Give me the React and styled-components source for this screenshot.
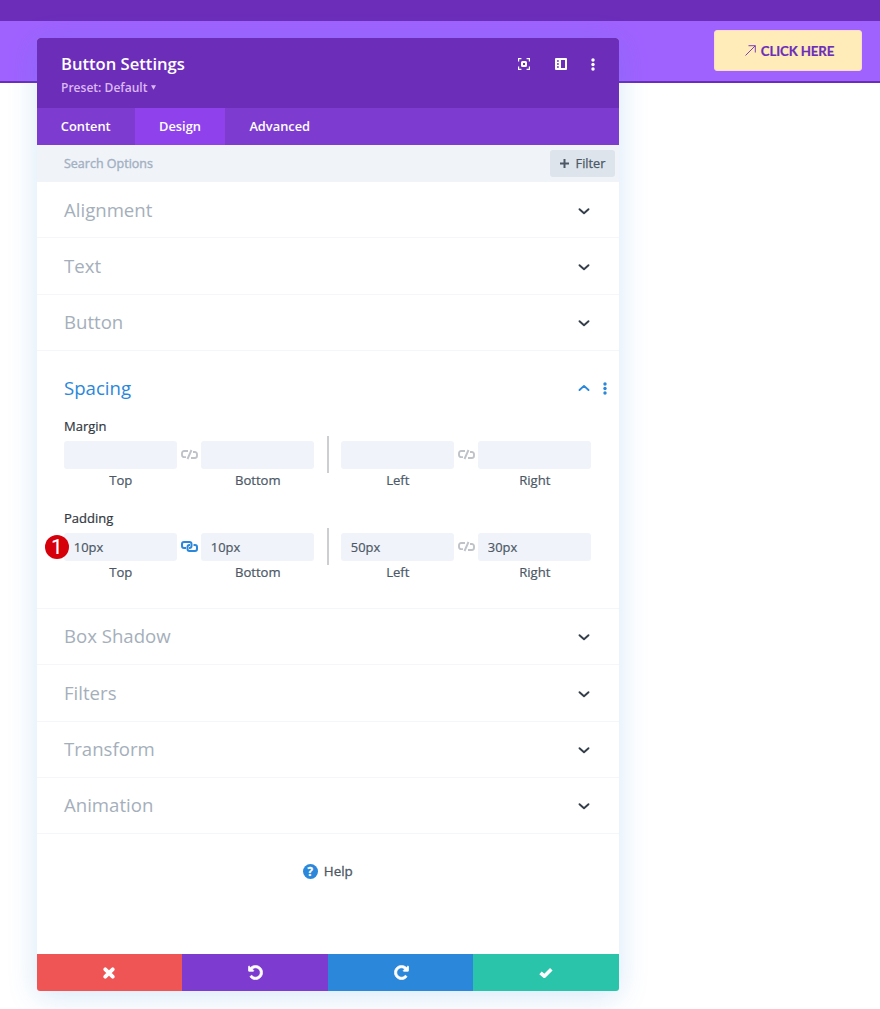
import React from 'react';
import styled, { createGlobalStyle } from 'styled-components';

const GlobalStyle = createGlobalStyle`
  * { box-sizing: border-box; }
  body {
    margin: 0;
    background: #fff;
    font-family: "Open Sans", "Noto Sans", sans-serif;
    overflow: hidden;
  }
  button, input { font-family: inherit; border: 0; margin: 0; padding: 0; }
  svg { display: block; }
`;

const Page = styled.div`
  position: relative;
  height: 1009px;
  overflow: hidden;
`;

const TopBar = styled.div`
  height: 21px;
  background: #6c2eb9;
`;

const SiteHeader = styled.header`
  display: flex;
  justify-content: flex-end;
  height: 62px;
  padding: 9px 18px 0 0;
  background: #a062ff;
  border-bottom: 2px solid #6c2eb9;
`;

const ClickButton = styled.button`
  display: flex;
  align-items: center;
  justify-content: center;
  gap: 5px;
  width: 148px;
  height: 41px;
  padding: 0 0 0 3px;
  border-radius: 3px;
  border: 1px solid #fbdcc9;
  background: #ffecb9;
  color: #6c2eb9;
  font: 700 13.3px/20px "Lato", sans-serif;
  letter-spacing: -0.15px;
  -webkit-text-stroke: 0.2px currentColor;
  white-space: nowrap;
`;

const Modal = styled.section`
  position: absolute;
  top: 38px;
  left: 36.5px;
  display: flex;
  flex-direction: column;
  width: 582.5px;
  height: 953px;
  border-radius: 3px;
  background: #fff;
  box-shadow: 0 5px 30px rgba(43, 135, 218, 0.2);
`;

const ModalHeader = styled.div`
  display: flex;
  justify-content: space-between;
  height: 70px;
  padding: 14px 24px 0 24.5px;
  border-radius: 3px 3px 0 0;
  background: #6c2eb9;
  color: #fff;
`;

const ModalTitle = styled.h1`
  margin: 0;
  font-size: 16.6px;
  font-weight: 600;
  line-height: 24px;
`;

const Preset = styled.div`
  display: flex;
  align-items: center;
  gap: 4px;
  font-size: 12.05px;
  font-weight: 600;
  line-height: 23px;
  color: #dcb8f5;
`;

const HeaderIcons = styled.div`
  display: flex;
  align-items: center;
  gap: 24.5px;
  height: 24px;
`;

const Tabs = styled.nav`
  display: flex;
  height: 37px;
  background: #7e3bd0;
`;

const Tab = styled.button`
  padding: 0 24.1px 1px 24.3px;
  background: ${p => (p.$active ? '#8f42ec' : 'transparent')};
  color: #fff;
  font-size: 12.85px;
  font-weight: 600;
`;

const SearchBar = styled.div`
  display: flex;
  align-items: center;
  justify-content: space-between;
  height: 37px;
  padding: 0 4px 0 27.5px;
  background: #f0f4f9;
  color: #a3b0c2;
  font-size: 12.5px;
  -webkit-text-stroke: 0.4px currentColor;
`;

const FilterButton = styled.button`
  display: flex;
  align-items: center;
  justify-content: center;
  gap: 7px;
  width: 65px;
  height: 27px;
  padding-bottom: 1px;
  border-radius: 3px;
  background: #dde4ec;
  color: #4c5866;
  font-size: 12.7px;
  -webkit-text-stroke: 0.25px currentColor;
`;

const Group = styled.div`
  height: ${p => (p.$open ? '257.8px' : '56.35px')};
  padding: ${p => (p.$open ? '9px' : '0')} 27.5px 0;
  border-bottom: 1px solid #f4f6f9;
`;

const GroupHead = styled.div`
  display: flex;
  align-items: center;
  justify-content: space-between;
  height: 56px;
  color: ${p => (p.$open ? '#2b87da' : '#a5afbb')};
`;

const GroupTitle = styled.h2`
  margin: 0;
  padding-bottom: 1px;
  font-size: 18.6px;
  font-weight: 400;
  line-height: 26px;
`;

const GroupTools = styled.div`
  display: flex;
  align-items: center;
  gap: 12.5px;
  padding-top: ${p => (p.$open ? '0' : '1px')};
  margin-right: ${p => (p.$open ? '-15px' : '2px')};
`;

const Field = styled.div`
  height: 91.3px;
  color: #32373f;
`;

const FieldLabel = styled.div`
  height: 25.2px;
  padding-top: 0.4px;
  font-size: 13px;
  line-height: 20px;
  -webkit-text-stroke: 0.2px currentColor;
`;

const Sides = styled.div`
  display: grid;
  grid-template-columns: 113px 24px 113px 27px 113px 24px 113px;
  align-items: start;
  margin-left: 0.3px;
`;

const Side = styled.label`
  position: relative;
  text-align: center;
  color: #4c5866;
  font-size: 13.1px;
  line-height: 23px;
  -webkit-text-stroke: 0.2px currentColor;
`;

const SideInput = styled.input`
  display: block;
  width: 100%;
  height: 28px;
  padding: 0 9.5px;
  border-radius: 3px;
  background: #f0f3f9;
  color: #4c5866;
  font-size: 12.9px;
  -webkit-text-stroke: 0.2px currentColor;
`;

const LinkIcon = styled.div`
  display: flex;
  align-items: center;
  justify-content: center;
  height: 27px;
`;

const Divider = styled.div`
  justify-self: center;
  width: 2px;
  height: 37px;
  margin-top: -5px;
  background: #cdced1;
`;

const StepBadge = styled.span`
  position: absolute;
  top: 2px;
  left: -19.5px;
  width: 24px;
  height: 24px;
  border-radius: 50%;
  background: #d6000b;
  color: #fff;
  font: 400 20px/24px Roboto, sans-serif;
  text-align: center;
`;

const Help = styled.div`
  display: flex;
  flex: 1;
  align-items: flex-start;
  justify-content: center;
  gap: 6px;
  padding-top: 27px;
  color: #4c5866;
  font-size: 13.4px;
  line-height: 20px;
  -webkit-text-stroke: 0.3px currentColor;
`;

const HelpDot = styled.span`
  width: 15px;
  height: 15px;
  margin-top: 2.5px;
  border-radius: 50%;
  background: #2b87da;
  color: #fff;
  font-size: 11.5px;
  font-weight: 700;
  line-height: 15px;
  text-align: center;
`;

const Footer = styled.div`
  display: grid;
  grid-template-columns: repeat(4, 1fr);
  height: 37px;
  border-radius: 0 0 3px 3px;
  overflow: hidden;
`;

const FooterButton = styled.button`
  display: flex;
  align-items: center;
  justify-content: center;
  background: ${p => p.$color};
  color: #fff;
`;

const RotateIcon = styled.svg`
  margin-left: 1px;
  transform: ${p => (p.$flip ? 'scaleX(-1)' : 'none')};
`;

const Stroke = ({ w, h, d, sw = 2, cap = 'butt' }) => (
  <svg width={w} height={h} viewBox={`0 0 ${w} ${h}`} fill="none" stroke="currentColor"
    strokeWidth={sw} strokeLinecap={cap} strokeLinejoin="round">
    <path d={d} />
  </svg>
);

const Chevron = ({ up }) => (
  <Stroke w={12} h={8} sw={1.9} cap="round" d={up ? 'M1.5 6 6 1.9 10.5 6' : 'M1.5 2.2 6 6.3 10.5 2.2'} />
);

const Dots = () => (
  <svg width="4" height="13" viewBox="0 0 4 13" fill="currentColor">
    <circle cx="2" cy="2" r="1.7" />
    <circle cx="2" cy="6.5" r="1.7" />
    <circle cx="2" cy="11" r="1.7" />
  </svg>
);

const Focus = () => (
  <svg width="12" height="12" viewBox="0 0 12 12" fill="none" stroke="currentColor">
    <path strokeWidth="1.2" d="M.6 3.4V.6h2.8M8.6.6h2.8v2.8M11.4 8.6v2.8H8.6M3.4 11.4H.6V8.6" />
    <rect x="4" y="4" width="4" height="4" rx=".5" strokeWidth="2" />
  </svg>
);

const Columns = () => (
  <svg width="12" height="12" viewBox="0 0 12 12">
    <rect width="12" height="12" rx="1" fill="currentColor" />
    <path fill="#6c2eb9" d="M6 2h4v8H6zM2 2.2h1.8v1.6H2zM2 5.2h1.8v1.6H2zM2 8.2h1.8v1.6H2z" />
  </svg>
);

const Linked = ({ on }) => on ? (
  <svg width="17" height="11" viewBox="0 0 17 11" fill="none" stroke="#2b87da" strokeWidth="2">
    <path d="M5 7H3a2 2 0 0 1-2-2V3a2 2 0 0 1 2-2h5.500a2 2 0 0 1 2 2v2a2 2 0 0 1-2 2H8" />
    <path d="M12.500 4H14a2 2 0 0 1 2 2v2a2 2 0 0 1-2 2H8.500a2 2 0 0 1-2-2V6a2 2 0 0 1 2-2H9" />
  </svg>
) : (
  <svg width="17" height="11" viewBox="0 0 17 11" fill="none" stroke="#bfc3c9" strokeWidth="1.9">
    <path d="M7 2H3.200A2.200 2.200 0 0 0 1 4.200v1.700A2.200 2.200 0 0 0 3.200 8.100H5M10.500 1 6.500 10M12 3h1.800A2.200 2.200 0 0 1 16 5.200v1.600A2.200 2.200 0 0 1 13.800 9H10" />
  </svg>
);

const Rotate = ({ flip }) => (
  <RotateIcon $flip={flip} width="15" height="15" viewBox="-50 78 1636 1636" fill="currentColor" stroke="currentColor" strokeWidth="80">
    <path d="M1536 896q0 156-61 298t-164 245-245 164-298 61q-172 0-327-72.500T177 1387q-7-10-6.500-22.500t8.500-20.500l137-138q10-9 25-9 16 2 23 12 73 95 179 147t225 52q104 0 198.500-40.500T1130 1258t109.500-163.500T1280 896t-40.500-198.500T1130 534 966.500 424.500 768 384q-98 0-188 35.500T420 521l137 138q31 30 14 69-17 40-59 40H64q-26 0-45-19T0 704V256q0-42 40-59 39-17 69 14l130 129q107-101 244.500-156.500T768 128q156 0 298 61t245 164 164 245 61 298z" />
  </RotateIcon>
);

const Section = ({ title, open, children }) => (
  <Group $open={open}>
    <GroupHead $open={open}>
      <GroupTitle>{title}</GroupTitle>
      <GroupTools $open={open} style={{ color: open ? '#2b87da' : '#343f4a' }}>
        <Chevron up={open} />
        {open && <Dots />}
      </GroupTools>
    </GroupHead>
    {children}
  </Group>
);

const Spacing = ({ label, values, linked, step }) => (
  <Field>
    <FieldLabel>{label}</FieldLabel>
    <Sides>
      <Side>
        <SideInput defaultValue={values[0]} />
        Top
        {step && <StepBadge>{step}</StepBadge>}
      </Side>
      <LinkIcon><Linked on={linked} /></LinkIcon>
      <Side><SideInput defaultValue={values[1]} />Bottom</Side>
      <Divider />
      <Side><SideInput defaultValue={values[2]} />Left</Side>
      <LinkIcon><Linked /></LinkIcon>
      <Side><SideInput defaultValue={values[3]} />Right</Side>
    </Sides>
  </Field>
);

const App = () => (
  <Page>
    <GlobalStyle />
    <TopBar />
    <SiteHeader>
      <ClickButton>
        <Stroke w={11} h={11} sw={0.9} d="M.5 10.500 10.300.7M3.500.7h6.800v6.800" />
        CLICK HERE
      </ClickButton>
    </SiteHeader>
    <Modal>
      <ModalHeader>
        <div>
          <ModalTitle>Button Settings</ModalTitle>
          <Preset>
            Preset: Default
            <svg width="5" height="5" viewBox="0 0 5 5" fill="currentColor"><path d="M0 .3h5L2.500 4.800z" /></svg>
          </Preset>
        </div>
        <HeaderIcons>
          <Focus />
          <Columns />
          <Dots />
        </HeaderIcons>
      </ModalHeader>
      <Tabs>
        <Tab>Content</Tab>
        <Tab $active>Design</Tab>
        <Tab>Advanced</Tab>
      </Tabs>
      <SearchBar>
        Search Options
        <FilterButton>
          <Stroke w={9} h={9} d="M4.500 0v9M0 4.500h9" />
          Filter
        </FilterButton>
      </SearchBar>
      <Section title="Alignment" />
      <Section title="Text" />
      <Section title="Button" />
      <Section title="Spacing" open>
        <Spacing label="Margin" values={['', '', '', '']} />
        <Spacing label="Padding" values={['10px', '10px', '50px', '30px']} linked step="1" />
      </Section>
      <Section title="Box Shadow" />
      <Section title="Filters" />
      <Section title="Transform" />
      <Section title="Animation" />
      <Help><HelpDot>?</HelpDot>Help</Help>
      <Footer>
        <FooterButton $color="#ef5555">
          <Stroke w={12} h={12} sw={3.8} cap="round" d="M2.300 2.300l7.400 7.400M9.700 2.300l-7.400 7.400" />
        </FooterButton>
        <FooterButton $color="#7e3bd0">
          <Rotate />
        </FooterButton>
        <FooterButton $color="#2b87da">
          <Rotate flip />
        </FooterButton>
        <FooterButton $color="#29c4a9">
          <Stroke w={14} h={12} sw={3.6} d="M1.500 5.800 5.300 9.200 12.300 2.200" />
        </FooterButton>
      </Footer>
    </Modal>
  </Page>
);

export default App;
